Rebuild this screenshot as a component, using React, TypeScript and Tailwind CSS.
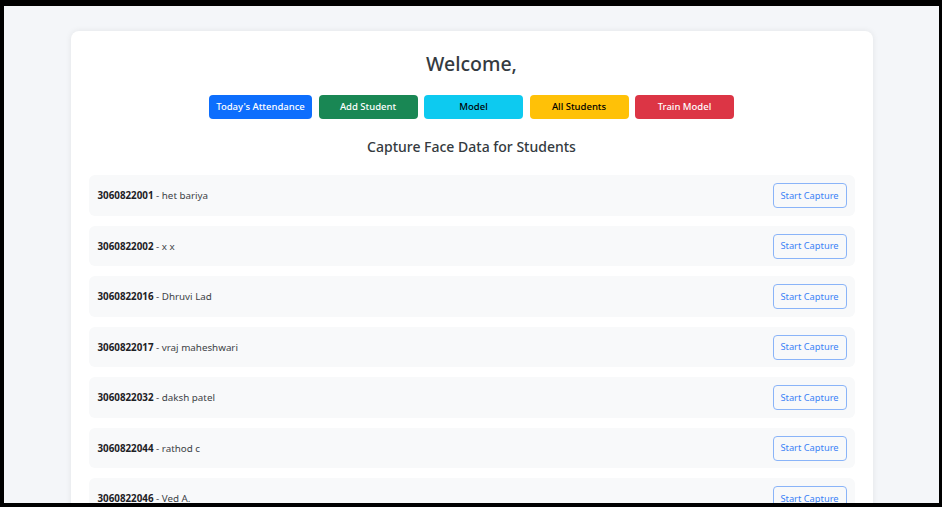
const students = [
  { id: "3060822001", name: "het bariya" },
  { id: "3060822002", name: "x x" },
  { id: "3060822016", name: "Dhruvi Lad" },
  { id: "3060822017", name: "vraj maheshwari" },
  { id: "3060822032", name: "daksh patel" },
  { id: "3060822044", name: "rathod c" },
  { id: "3060822046", name: "Ved A." },
  { id: "3060822051", name: "jay shah" },
];

const navButtons = [
  { label: "Today's Attendance", cls: "bg-[#0d6efd] text-white w-[103px]" },
  { label: "Add Student", cls: "bg-[#198754] text-white w-[99px]" },
  { label: "Model", cls: "bg-[#0dcaf0] text-black w-[99px]" },
  { label: "All Students", cls: "bg-[#ffc107] text-black w-[99px]" },
  { label: "Train Model", cls: "bg-[#dc3545] text-white w-[99px]" },
];

const App = () => {
  return (
    <div
      className="h-[507px] w-[942px] overflow-hidden border-t-[6px] border-l-[4px] border-r-[3px] border-b-[4px] border-black bg-[#f4f6f9]"
      style={{ fontFamily: '"Noto Sans", "Open Sans", sans-serif' }}
    >
      <div className="mx-auto mt-[25px] w-[802px] rounded-lg bg-white px-[18px] pt-[18px] pb-6 shadow-[0_0_6px_rgba(0,0,0,0.08)]">
        <h1 className="text-center text-[19.5px] leading-[30px] font-medium text-[#343a40]">
          Welcome,
        </h1>
        <div className="mt-[16px] flex justify-center gap-[6.5px]">
          {navButtons.map((b) => (
            <button
              key={b.label}
              className={`h-[24px] rounded-[4px] text-[9.5px] font-medium ${b.cls}`}
            >
              {b.label}
            </button>
          ))}
        </div>
        <h2 className="mt-[18px] text-center text-[14px] leading-[20px] font-medium text-[#343a40]">
          Capture Face Data for Students
        </h2>
        <div className="mt-[18px] flex flex-col gap-[10px]">
          {students.map((s) => (
            <div
              key={s.id}
              className="flex h-[40.5px] items-center justify-between rounded-md bg-[#f8f9fa] pl-[9px] pr-[8px] pt-[1px]"
            >
              <p className="pt-[2px] text-[9.8px] text-[#3d4246]">
                <span className="font-bold text-[#1d2125]">{s.id}</span> - {s.name}
              </p>
              <button className="h-[25px] w-[74px] rounded-[4px] border border-[#8ab4f8] text-[9.3px] text-[#3b82f6]">
                Start Capture
              </button>
            </div>
          ))}
        </div>
      </div>
    </div>
  );
};

export default App;
